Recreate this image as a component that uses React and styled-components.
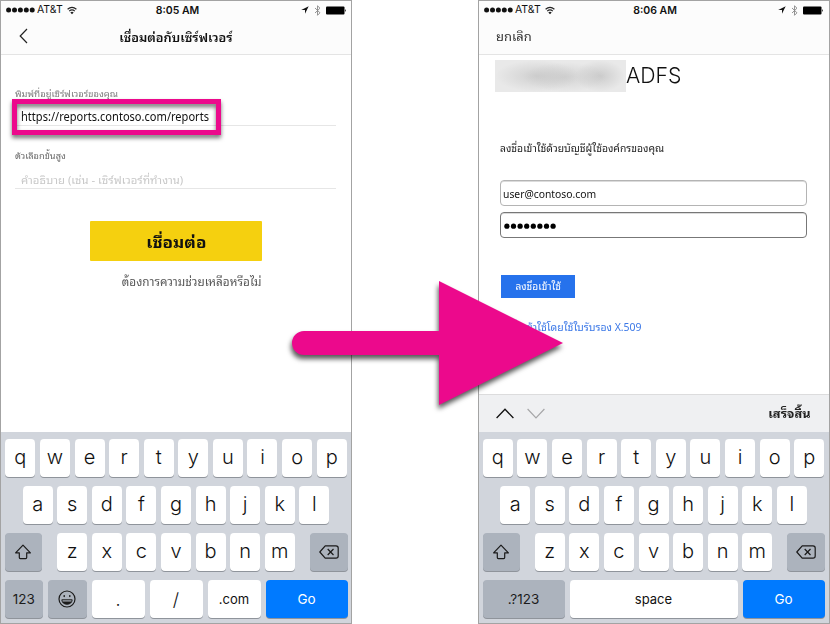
import React from "react";
import styled, { createGlobalStyle } from "styled-components";

const Global = createGlobalStyle`
  * { box-sizing: border-box; }
  body { margin: 0; background: #fff; }
`;

const latin = `Inter, "Liberation Sans", sans-serif`;
const thai = `"Noto Sans", "Noto Sans Thai Looped", "Noto Sans Thai", "Open Sans", sans-serif`;

const Stage = styled.main`
  position: relative;
  width: 830px;
  height: 624px;
  display: flex;
  justify-content: space-between;
  overflow: hidden;
  background: #fff;
`;

const Phone = styled.section`
  width: 352px;
  height: 624px;
  display: flex;
  flex-direction: column;
  border: 1px solid #a3a3a3;
  background: #fff;
`;

const Header = styled.header`
  height: 54px;
  flex: none;
  background: #fcfcfc;
  border-bottom: 1px solid #e4e4e4;
`;

const StatusBar = styled.div`
  height: 18px;
  display: grid;
  grid-template-columns: 1fr auto 1fr;
  align-items: center;
  padding: 0 ${(p) => p.$right}px 0 5px;
  font-family: ${latin};
  color: #111;
`;

const Signal = styled.div`
  display: flex;
  align-items: center;
  gap: 2px;
`;

const StatusIcons = styled.div`
  display: flex;
  align-items: center;
  justify-content: flex-end;
  gap: 5px;
`;

const Clock = styled.div`
  font-size: 10.5px;
  font-weight: 600;
  padding-left: 2px;
`;

const NavBar = styled.div`
  height: 35px;
  display: grid;
  grid-template-columns: 50px 1fr 50px;
  align-items: center;
  padding-left: ${(p) => p.$inset || 0}px;
`;

const Text = styled.span`
  display: inline-block;
  white-space: nowrap;
  font-family: ${(p) => p.$font || thai};
  font-size: ${(p) => p.$size}px;
  font-weight: ${(p) => p.$weight || 400};
  line-height: ${(p) => p.$line || 18}px;
  color: ${(p) => p.$color || "#111"};
  transform: scaleX(${(p) => p.$stretch || 1});
  transform-origin: ${(p) => p.$origin || "left"} center;
`;

const NavTitle = styled.div`
  text-align: center;
  padding-top: 2px;
`;

const BackIcon = styled.svg`
  margin-bottom: 2px;
`;

const ConnectForm = styled.div`
  flex: 1;
  display: flex;
  flex-direction: column;
  padding: 30px 15px 0 14px;
`;

const Field = styled.label`
  display: flex;
  flex-direction: column;
  height: ${(p) => p.$height}px;
  border-bottom: 1px solid #e6e6e6;
  margin-bottom: ${(p) => p.$after || 0}px;
`;

const FieldValue = styled.div`
  height: 24px;
  padding-left: 6px;
  margin-top: ${(p) => p.$top}px;
`;

const ConnectButton = styled.button`
  width: 172px;
  height: 40px;
  margin: 32px 0 0 75px;
  padding: 1px 0 0;
  border: 0;
  border-radius: 1px;
  background: #f5d00f;
`;

const Help = styled.div`
  width: 172px;
  margin: 11px 0 0 75px;
  text-align: right;
`;

const Highlight = styled.div`
  position: absolute;
  left: 12px;
  top: 99px;
  width: 209px;
  height: 36px;
  border: 5px solid #ec098c;
  filter: drop-shadow(0 3px 2px rgba(0, 0, 0, 0.55));
`;

const SignInForm = styled.div`
  flex: 1;
  display: flex;
  flex-direction: column;
  align-items: flex-start;
  padding: 5px 21px 0 21px;
`;

const Brand = styled.div`
  display: flex;
  align-items: center;
  height: 32px;
  margin-left: -5px;
`;

const BrandName = styled.div`
  padding-bottom: 2px;
`;

const Redacted = styled.div`
  width: 131px;
  height: 32px;
  background:
    radial-gradient(ellipse at center, rgba(190, 190, 190, 0.6), rgba(190, 190, 190, 0) 70%) 0 0 / 84px 32px no-repeat,
    radial-gradient(ellipse at center, rgba(195, 195, 195, 0.6), rgba(195, 195, 195, 0) 70%) 28px 2px / 84px 30px no-repeat,
    radial-gradient(ellipse at center, rgba(185, 185, 185, 0.6), rgba(185, 185, 185, 0) 70%) 80px 0 / 50px 32px no-repeat,
    #e9e9e9;
`;

const Instruction = styled.div`
  margin-top: 46px;
  height: 19px;
`;

const Input = styled.div`
  width: 307px;
  height: 26px;
  border: 1px solid ${(p) => p.$edge};
  border-radius: 4px;
  margin-top: ${(p) => p.$top}px;
  padding: 2px 0 0 2px;
  box-shadow: inset 0 1px 0 rgba(0, 0, 0, 0.14);
  display: flex;
  align-items: center;
`;

const SignInButton = styled.button`
  width: 74px;
  height: 23px;
  margin: 37px 0 0 1px;
  padding: 0;
  border: 0;
  background: #2672ec;
`;

const Certificate = styled.div`
  margin-top: 19px;
`;

const Accessory = styled.div`
  height: 38px;
  flex: none;
  display: flex;
  align-items: center;
  justify-content: space-between;
  padding: 0 18px 0 16.5px;
  background: #eff0f2;
  border-top: 1px solid #dcdcdd;
`;

const Arrows = styled.div`
  display: flex;
  gap: 13px;
`;

const Keyboard = styled.div`
  height: 191px;
  flex: none;
  display: flex;
  flex-direction: column;
  gap: 9.3px;
  padding: 6.5px ${(p) => p.$right}px 0 3.5px;
  background: #d1d5dc;
`;

const KeyRow = styled.div`
  display: flex;
  justify-content: ${(p) => p.$justify || "center"};
  height: 38px;
  gap: 4.6px;
`;

const LetterGroup = styled.div`
  display: flex;
  gap: 4.6px;
`;

const tones = {
  light: ["#fff", "#111"],
  dark: ["#acb3bd", "#1c1c1c"],
  blue: ["#007aff", "#fff"],
};

const Key = styled.div`
  width: ${(p) => p.$w || 30}px;
  height: 38px;
  flex: none;
  display: flex;
  align-items: center;
  justify-content: center;
  padding-bottom: ${(p) => p.$lift || 0}px;
  border-radius: 4px;
  background: ${(p) => tones[p.$tone || "light"][0]};
  color: ${(p) => tones[p.$tone || "light"][1]};
  box-shadow: 0 1px 0 #8f949b;
  font-family: ${latin};
  font-size: ${(p) => p.$size || 20}px;
  font-weight: ${(p) => p.$weight || 350};
`;

const PointerArrow = styled.svg`
  position: absolute;
  left: 280px;
  top: 270px;
  filter: drop-shadow(-1px 4px 2.5px rgba(0, 0, 0, 0.65));
`;

const Status = ({ time, right }) => (
  <StatusBar $right={right}>
    <Signal>
      <svg width="29" height="6" viewBox="0 0 29 6">
        {[2.6, 8.5, 14.4, 20.3, 26.2].map((x) => (
          <circle key={x} cx={x} cy="3" r="2.5" fill="#111" />
        ))}
      </svg>
      <Text $font={latin} $size={10.5}>AT&amp;T</Text>
      <svg width="12" height="9" viewBox="-2 0 12 9" fill="none" stroke="#222" strokeWidth="1.2">
        <path d="M.6 3.2Q5-.6 9.4 3.2M2.2 5.1Q5 2.7 7.8 5.1" />
        <path d="M3.3 6.5Q5 5.2 6.7 6.5L5 8.3Z" fill="#222" stroke="none" />
      </svg>
    </Signal>
    <Clock>{time}</Clock>
    <StatusIcons>
      <svg width="8" height="8" viewBox="0 0 8 8"><path d="M7.7.2L.2 4H4v3.8Z" fill="#111" /></svg>
      <svg width="7" height="11" viewBox="0 0 7 11" fill="none" stroke="#888" strokeWidth=".9">
        <path d="M1 3L6 7.8 3.5 10.3V.8L6 3.2 1 8" />
      </svg>
      <svg width="21" height="9" viewBox="0 0 21 9" fill="#000">
        <rect x="0" y=".5" width="18.5" height="8" rx="1" />
        <path d="M19.2 3Q20.8 4.5 19.2 6Z" />
      </svg>
    </StatusIcons>
  </StatusBar>
);

const Shift = () => (
  <svg width="18" height="16" viewBox="0 0 18 16" fill="none" stroke="#1a1a1a" strokeWidth="1.2" strokeLinejoin="round">
    <path d="M9 1.2L16.4 8.8H12.7V13.6Q12.7 14.6 11.7 14.6H6.3Q5.3 14.6 5.3 13.6V8.8H1.6Z" />
  </svg>
);

const Delete = () => (
  <svg width="20" height="14" viewBox="0 0 20 14" fill="none" stroke="#1a1a1a" strokeWidth="1.2" strokeLinejoin="round">
    <path d="M6.2.8H17Q19.2.8 19.2 3V11Q19.2 13.2 17 13.2H6.2L.8 7Z" />
    <path d="M8.7 4L14.5 10M14.5 4L8.7 10" />
  </svg>
);

const Smile = () => (
  <svg width="18" height="18" viewBox="0 0 18 18" fill="none" stroke="#1a1a1a" strokeWidth="1.2">
    <circle cx="9" cy="9" r="8" />
    <ellipse cx="6.2" cy="6.1" rx=".8" ry="1.1" fill="#1a1a1a" stroke="none" />
    <ellipse cx="11.8" cy="6.1" rx=".8" ry="1.1" fill="#1a1a1a" stroke="none" />
    <path d="M3.8 9.8H14.2Q13.6 14.2 9 14.2T3.8 9.8Z" strokeWidth="1" strokeLinejoin="round" />
    <path d="M4.3 11.5H13.7Q12.6 14.2 9 14.2T4.3 11.5Z" fill="#1a1a1a" stroke="none" />
  </svg>
);

const Letters = ({ chars }) => [...chars].map((c) => <Key key={c} $lift={2}>{c}</Key>);

const Keys = ({ right, children }) => (
  <Keyboard $right={right}>
    <KeyRow><Letters chars="qwertyuiop" /></KeyRow>
    <KeyRow><Letters chars="asdfghjkl" /></KeyRow>
    <KeyRow $justify="space-between">
      <Key $tone="dark" $w={37.5}><Shift /></Key>
      <LetterGroup><Letters chars="zxcvbnm" /></LetterGroup>
      <Key $tone="dark" $w={37.5}><Delete /></Key>
    </KeyRow>
    <KeyRow $justify="space-between">{children}</KeyRow>
  </Keyboard>
);

const ConnectPhone = () => (
  <Phone>
    <Header>
      <Status time="8:05 AM" right={4} />
      <NavBar>
        <BackIcon width="30" height="16" viewBox="0 0 30 16" fill="none" stroke="#222" strokeWidth="1.2">
          <path d="M26 1L19.2 8L26 15" />
        </BackIcon>
        <NavTitle><Text $size={12} $weight={600} $stretch={1.07} $origin="center">เชื่อมต่อกับเซิร์ฟเวอร์</Text></NavTitle>
      </NavBar>
    </Header>
    <ConnectForm>
      <Field $height={41} $after={21}>
        <Text $size={9} $color="#7a7a7a" $stretch={1.04}>พิมพ์ที่อยู่เซิร์ฟเวอร์ของคุณ</Text>
        <FieldValue $top={4}><Text $size={12} $stretch={0.922}>https://reports.contoso.com/reports</Text></FieldValue>
      </Field>
      <Field $height={42}>
        <Text $size={9} $color="#6a6a6a" $stretch={1.03}>ตัวเลือกขั้นสูง</Text>
        <FieldValue $top={5}><Text $size={10.5} $color="#c8c8c8" $stretch={1.08}>คำอธิบาย (เช่น - เซิร์ฟเวอร์ที่ทำงาน)</Text></FieldValue>
      </Field>
      <ConnectButton><Text $size={15} $weight={700} $stretch={1.14} $origin="center">เชื่อมต่อ</Text></ConnectButton>
      <Help><Text $size={12} $color="#555" $stretch={0.98} $origin="right">ต้องการความช่วยเหลือหรือไม่</Text></Help>
    </ConnectForm>
    <Keys right={3.5}>
      <Key $tone="dark" $w={38.5} $size={13.5} $weight={400}>123</Key>
      <Key $tone="dark" $w={38.5}><Smile /></Key>
      <Key $w={53} $size={18}>.</Key>
      <Key $w={53} $size={18}>/</Key>
      <Key $w={53} $size={13} $weight={400} $lift={1}>.com</Key>
      <Key $tone="blue" $w={82} $size={13.5} $weight={400} $lift={1}>Go</Key>
    </Keys>
  </Phone>
);

const SignInPhone = () => (
  <Phone>
    <Header>
      <Status time="8:06 AM" right={5} />
      <NavBar $inset={17}><Text $size={12.5} $color="#333" $stretch={1.04} $line={20}>ยกเลิก</Text></NavBar>
    </Header>
    <SignInForm>
      <Brand>
        <Redacted />
        <BrandName><Text $font={latin} $size={22} $weight={300} $line={30} $stretch={0.965}>ADFS</Text></BrandName>
      </Brand>
      <Instruction><Text $size={10.5} $color="#222" $stretch={0.987}>ลงชื่อเข้าใช้ด้วยบัญชีผู้ใช้องค์กรของคุณ</Text></Instruction>
      <Input $edge="#b4b4b4" $top={23}><Text $size={11} $stretch={0.94}>user@contoso.com</Text></Input>
      <Input $edge="#777" $top={6}>
        <svg width="54" height="8" viewBox="0 0 54 8">
          {[...Array(8)].map((_, i) => <circle key={i} cx={3.9 + i * 6.6} cy="4.2" r="2.6" fill="#000" />)}
        </svg>
      </Input>
      <SignInButton><Text $size={9.5} $color="#fff" $stretch={1.07} $origin="center">ลงชื่อเข้าใช้</Text></SignInButton>
      <Certificate><Text $size={10.5} $color="#3b78e7" $stretch={0.995}>ลงชื่อเข้าใช้โดยใช้ใบรับรอง X.509</Text></Certificate>
    </SignInForm>
    <Accessory>
      <Arrows>
        <svg width="18" height="11" viewBox="0 0 18 11" fill="none" stroke="#111" strokeWidth="1.3"><path d="M.6 10L9 1.2L17.4 10" /></svg>
        <svg width="18" height="11" viewBox="0 0 18 11" fill="none" stroke="#a6a6a8" strokeWidth="1.2"><path d="M.6 1L9 9.8L17.4 1" /></svg>
      </Arrows>
      <Text $size={12} $weight={700} $color="#222" $stretch={1.07} $origin="right">เสร็จสิ้น</Text>
    </Accessory>
    <Keys right={4.5}>
      <Key $tone="dark" $w={82} $size={13.5} $weight={400}>.?123</Key>
      <Key $w={168} $size={13} $weight={400} $lift={1}>space</Key>
      <Key $tone="blue" $w={82} $size={13.5} $weight={400} $lift={1}>Go</Key>
    </Keys>
  </Phone>
);

export default function App() {
  return (
    <>
      <Global />
      <Stage>
        <ConnectPhone />
        <SignInPhone />
        <Highlight />
        <PointerArrow width="300" height="150" viewBox="280 270 300 150">
          <path d="M304 331H439V281L563 343L439 405V355H304A12 12 0 0 1 304 331Z" fill="#ec098c" />
        </PointerArrow>
      </Stage>
    </>
  );
}
